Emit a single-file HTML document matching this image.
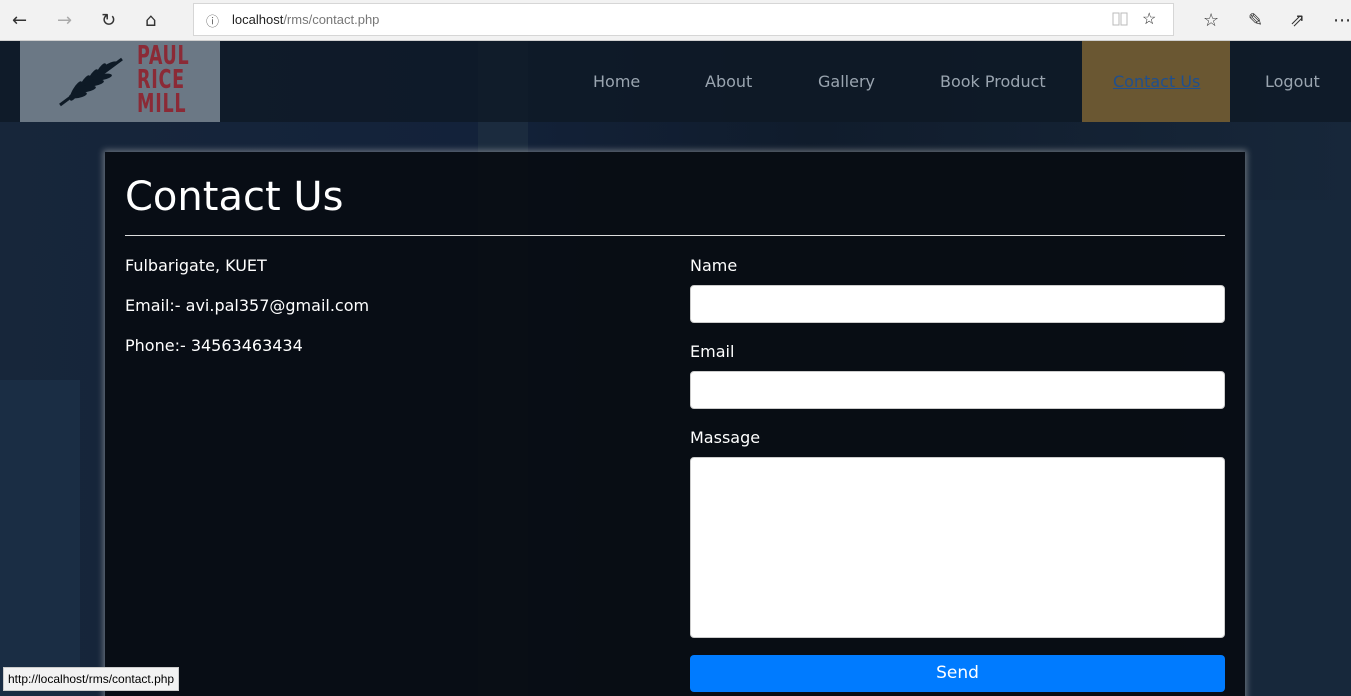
<!DOCTYPE html>
<html><head><meta charset="utf-8"><style>
*{margin:0;padding:0;box-sizing:border-box}
html,body{width:1351px;height:696px;overflow:hidden}
body{font-family:"DejaVu Sans","Liberation Sans",sans-serif;background:#0f1b29;position:relative}
.chrome{position:absolute;left:0;top:0;width:1351px;height:41px;background:#f2f2f2;border-bottom:1px solid #d0d0d0}
.url{position:absolute;left:193px;top:3px;width:981px;height:33px;background:#fff;border:1px solid #d6d6d6;font:13px "Liberation Sans",sans-serif;color:#222;padding:8px 0 0 38px}
.url span{color:#777}
.ic{position:absolute;top:10px;font:18px "DejaVu Sans",sans-serif;color:#333}
.bg{position:absolute;left:0;top:41px;width:1351px;height:655px;background:
linear-gradient(90deg,#17263a 0,#13223a 35%,#101c2c 60%,#17273a 100%)}
.bld{position:absolute;background:#0e1826}
.nav{position:absolute;left:0;top:41px;width:1351px;height:81px;background:rgba(14,24,36,.75)}
.logo{position:absolute;left:20px;top:41px;width:200px;height:81px;background:#6b7885}
.logo .t{position:absolute;left:117px;top:3px;color:#8b2a36;font:bold 26px/24px "DejaVu Sans Condensed","Liberation Sans Narrow",sans-serif;letter-spacing:1px;transform:scaleX(.75);transform-origin:left}
.nav a{position:absolute;top:31px;color:#9aa5b0;font-size:16px;text-decoration:none}
.active{position:absolute;left:1082px;top:41px;width:148px;height:81px;background:#6a5732}
.card{position:absolute;left:105px;top:152px;width:1140px;height:560px;background:rgba(8,12,18,.93);box-shadow:0 0 6px 2px rgba(200,200,200,.45)}
h1{position:absolute;left:20px;top:22px;color:#fff;font-weight:normal;font-size:40px}
.hr{position:absolute;left:20px;top:83px;width:1100px;height:1px;background:#ddd}
.p{position:absolute;left:20px;color:#fff;font-size:16px}
.l{position:absolute;left:585px;color:#fff;font-size:16px}
.in{position:absolute;left:585px;width:535px;background:#fff;border:1px solid #ccc;border-radius:4px}
.btn{position:absolute;left:585px;top:503px;width:535px;height:37px;background:#007bff;border-radius:4px;color:#fff;font-size:17px;text-align:center;line-height:37px}
.status{position:absolute;left:3px;top:667px;background:#f2f2f2;border:1px solid #ccc;font:12px "Liberation Sans",sans-serif;padding:4px 4px;color:#000}
</style></head><body>
<div class="bg"></div>
<div class="bld" style="left:478px;top:41px;width:50px;height:655px;background:#1b2b3e"></div>
<div class="bld" style="left:0;top:380px;width:80px;height:316px;background:#1a2d44"></div>
<div class="bld" style="left:1245px;top:200px;width:106px;height:496px;background:#17283b"></div>
<div class="nav"></div>
<div class="logo"><svg width="80" height="70" style="position:absolute;left:38px;top:12px" viewBox="0 0 80 70"><path d="M2 52 L64 6" stroke="#0e1a26" stroke-width="3"/><g fill="#0e1a26"><ellipse cx="50" cy="14" rx="10" ry="3" transform="rotate(-30 50 14)"/><ellipse cx="42" cy="20" rx="11" ry="3.5" transform="rotate(-60 42 20)"/><ellipse cx="34" cy="26" rx="11" ry="3.5" transform="rotate(-60 34 26)"/><ellipse cx="26" cy="32" rx="11" ry="3.5" transform="rotate(-60 26 32)"/><ellipse cx="18" cy="38" rx="11" ry="3.5" transform="rotate(-60 18 38)"/><ellipse cx="44" cy="24" rx="10" ry="3" transform="rotate(-10 44 24)"/><ellipse cx="36" cy="30" rx="10" ry="3" transform="rotate(-10 36 30)"/><ellipse cx="28" cy="36" rx="10" ry="3" transform="rotate(-10 28 36)"/><ellipse cx="20" cy="42" rx="9" ry="3" transform="rotate(-10 20 42)"/></g></svg><div class="t">PAUL<br>RICE<br>MILL</div></div>
<div class="active"></div>
<div class="nav" style="background:none">
<a style="left:593px">Home</a><a style="left:705px">About</a><a style="left:818px">Gallery</a><a style="left:940px">Book Product</a><a style="left:1113px;color:#1f4f8f;text-decoration:underline">Contact Us</a><a style="left:1265px">Logout</a></div>
<div class="chrome">
<span class="ic" style="left:12px">←</span><span class="ic" style="left:57px;color:#aaa">→</span><span class="ic" style="left:101px">↻</span><span class="ic" style="left:145px">⌂</span>
<div class="url"><span style="position:absolute;left:12px;top:7px;color:#666">ⓘ</span>localhost<span>/rms/contact.php</span>
<svg style="position:absolute;left:918px;top:8px" width="16" height="14" viewBox="0 0 16 14"><path d="M1 1h6v12H1zM9 1h6v12H9z" fill="none" stroke="#bbb"/></svg><span style="position:absolute;left:948px;top:5px;color:#222;font-size:16px">☆</span></div>
<span class="ic" style="left:1203px">☆</span><span class="ic" style="left:1248px">✎</span><span class="ic" style="left:1290px">⇗</span><span class="ic" style="left:1333px">⋯</span>
</div>
<div class="card">
<h1>Contact Us</h1><div class="hr"></div>
<div class="p" style="top:104px">Fulbarigate, KUET</div>
<div class="p" style="top:144px">Email:- avi.pal357@gmail.com</div>
<div class="p" style="top:184px">Phone:- 34563463434</div>
<div class="l" style="top:104px">Name</div>
<div class="in" style="top:133px;height:38px"></div>
<div class="l" style="top:190px">Email</div>
<div class="in" style="top:219px;height:38px"></div>
<div class="l" style="top:276px">Massage</div>
<div class="in" style="top:305px;height:181px"></div>
<div class="btn">Send</div>
</div>
<div class="status">http://localhost/rms/contact.php</div>
</body></html>
